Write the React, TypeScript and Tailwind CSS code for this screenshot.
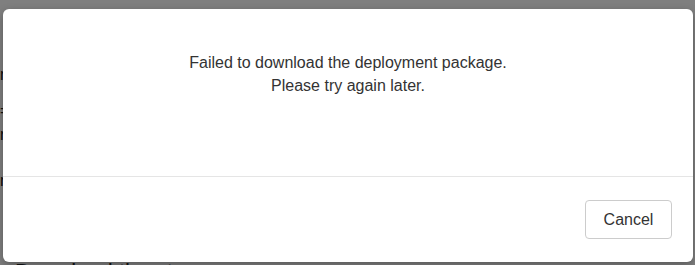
import React from 'react';

const font = { fontFamily: '"Liberation Sans", Arial, sans-serif' };

const BackgroundPage: React.FC = () => (
  <div className="flex h-full flex-col text-[#222]" style={font}>
    <div className="mt-[66px] text-[16px] leading-[18px]">n</div>
    <div className="mt-[18px] text-[16px] leading-[18px]">=</div>
    <div className="mt-[6px] text-[16px] leading-[18px]">r</div>
    <div className="mt-[28px] text-[16px] leading-[18px]">n</div>
    <h2 className="mt-[69px] pl-[15px] text-[22px] leading-[26px]">Download the streamer</h2>
  </div>
);

const ErrorModal: React.FC = () => (
  <div
    className="absolute left-[3px] top-[9px] flex h-[253px] w-[690px] flex-col rounded-[6px] bg-white shadow-[0_3px_9px_rgba(0,0,0,0.3)]"
    style={font}
  >
    <div className="h-[168px] border-b border-[#e5e5e5] pt-[42px] text-center text-[16px] leading-[23px] text-[#333]">
      <p>Failed to download the deployment package.</p>
      <p>Please try again later.</p>
    </div>
    <div className="flex flex-1 items-center justify-end pr-[21px]">
      <button className="h-[39px] w-[87px] rounded-[4px] border border-[#ccc] bg-white text-[16px] text-[#333]">
        Cancel
      </button>
    </div>
  </div>
);

export default function App() {
  return (
    <div className="relative h-[265px] w-[695px] overflow-hidden bg-white">
      <BackgroundPage />
      <div className="absolute inset-0 bg-black/50" />
      <ErrorModal />
    </div>
  );
}
